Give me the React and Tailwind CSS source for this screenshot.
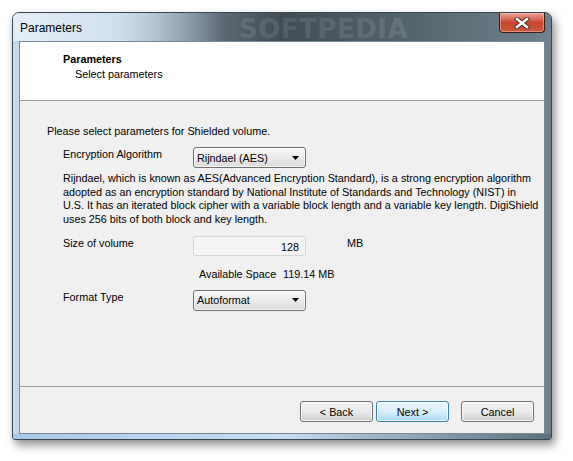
import React from "react";

const font = { fontFamily: '"Liberation Sans", Arial, sans-serif' };

const Combo = ({ label }) => (
    <div className="w-[113px] h-[21px] rounded-[3px] border border-[#707070] bg-gradient-to-b from-[#f6f6f6] via-[#ebebeb] to-[#dcdcdc] flex items-center justify-between pl-[3px] pr-[6px] shadow-[inset_0_0_0_1px_rgba(255,255,255,0.7)]">
        <span className="leading-[14px] text-black">{label}</span>
        <svg width="7" height="4" viewBox="0 0 7 4"><path d="M0 0h7L3.5 4z" fill="#000" /></svg>
    </div>
);

const Button = ({ children, primary }) => (
    <div
        className={`w-[73px] h-[21px] rounded-[3px] border flex items-center justify-center text-black shadow-[inset_0_0_0_1px_rgba(255,255,255,0.8)] ${primary
            ? "border-[#3c7fb1] bg-gradient-to-b from-[#eaf6fd] via-[#d9f0fc] to-[#a7d9f5]"
            : "border-[#707070] bg-gradient-to-b from-[#f2f2f2] via-[#ebebeb] to-[#cfcfcf]"
            }`}
    >
        {children}
    </div>
);

export default function App() {
    return (
        <div className="w-[573px] h-[461px] bg-white overflow-hidden" style={font}>
            <div className="ml-[12px] mt-[12px] w-[540px] h-[428px] rounded-t-[7px] rounded-b-[3px] border border-[#3a4650] bg-gradient-to-r from-[#c8dcee] via-[#3f4c56] to-[#6f828d] shadow-[3px_5px_10px_rgba(0,0,0,0.45)] flex flex-col px-[6px] relative overflow-hidden">
                {/* title bar */}
                <div className="h-[28px] flex items-start justify-between relative">
                    <div className="absolute inset-y-0 left-[-6px] w-[210px] bg-gradient-to-r from-[#e4eef8] via-[#cfdfee] to-transparent" />
                    <div className="absolute left-[220px] top-[-3px] text-[26px] font-bold tracking-[0.5px] text-white/10" style={{ fontFamily: '"DejaVu Sans", sans-serif' }}>SOFTPEDIA</div>
                    <span className="relative mt-[8px] ml-[1px] text-[12px] leading-[14px] text-black">Parameters</span>
                    <div className="relative w-[46px] h-[20px] rounded-b-[4px] border border-[#3b1a14] border-t-0 bg-gradient-to-b from-[#e9a597] via-[#c9452d] to-[#c8563e] flex items-center justify-center shadow-[inset_0_0_0_1px_rgba(255,200,190,0.5)]">
                        <svg width="16" height="12" viewBox="0 0 16 12">
                            <path d="M3 2l10 8M13 2L3 10" stroke="#4a2a26" strokeWidth="4.5" strokeLinecap="square" />
                            <path d="M3 2l10 8M13 2L3 10" stroke="#fff" strokeWidth="2.6" strokeLinecap="square" />
                        </svg>
                    </div>
                </div>
                {/* client */}
                <div className="flex-1 border border-[#7d8a94] bg-[#f0f0f0] flex flex-col text-[10.8px] leading-[14px] text-black">
                    <div className="h-[59px] bg-white border-b border-[#a0a0a0] pl-[43px] pt-[10px]">
                        <div className="font-bold">Parameters</div>
                        <div className="ml-[12px] mt-[1px]">Select parameters</div>
                    </div>
                    <div className="flex-1 pl-[27px] pt-[23px] border-b border-[#a0a0a0] overflow-hidden">
                        <div>Please select parameters for Shielded volume.</div>
                        <div className="flex items-start mt-[9px]">
                            <div className="w-[146px] pl-[16px]">Encryption Algorithm</div>
                            <Combo label="Rijndael (AES)" />
                        </div>
                        <div className="pl-[16px] mt-[4px] leading-[13.67px] whitespace-nowrap">
                            <div>Rijndael, which is known as AES(Advanced Encryption Standard), is a strong encryption algorithm</div>
                            <div>adopted as an encryption standard by National Institute of Standards and Technology (NIST) in</div>
                            <div>U.S. It has an iterated block cipher with a variable block length and a variable key length. DigiShield</div>
                            <div>uses 256 bits of both block and key length.</div>
                        </div>
                        <div className="flex items-start mt-[9px]">
                            <div className="w-[146px] pl-[16px]">Size of volume</div>
                            <div className="w-[113px] h-[20px] border border-[#d5d5d5] bg-[#f4f4f4] rounded-[2px] flex items-center justify-end pr-[6px] pt-[2px]">128</div>
                            <div className="ml-[41px]">MB</div>
                        </div>
                        <div className="mt-[11px] ml-[152px] flex">
                            <span className="w-[84px]">Available Space</span>
                            <span>119.14 MB</span>
                        </div>
                        <div className="flex items-start mt-[9px]">
                            <div className="w-[146px] pl-[16px]">Format Type</div>
                            <Combo label="Autoformat" />
                        </div>
                    </div>
                    <div className="h-[46px] flex items-start justify-end pt-[14px] pr-[10px]">
                        <Button>&lt; Back</Button>
                        <div className="ml-[3px]"><Button primary>Next &gt;</Button></div>
                        <div className="ml-[12px]"><Button>Cancel</Button></div>
                    </div>
                </div>
                {/* bottom frame */}
                <div className="h-[5px] -mx-[6px] bg-gradient-to-r from-[#a9c9ea] via-[#c4ddf4] to-[#5d717c]" />
            </div>
        </div>
    );
}
